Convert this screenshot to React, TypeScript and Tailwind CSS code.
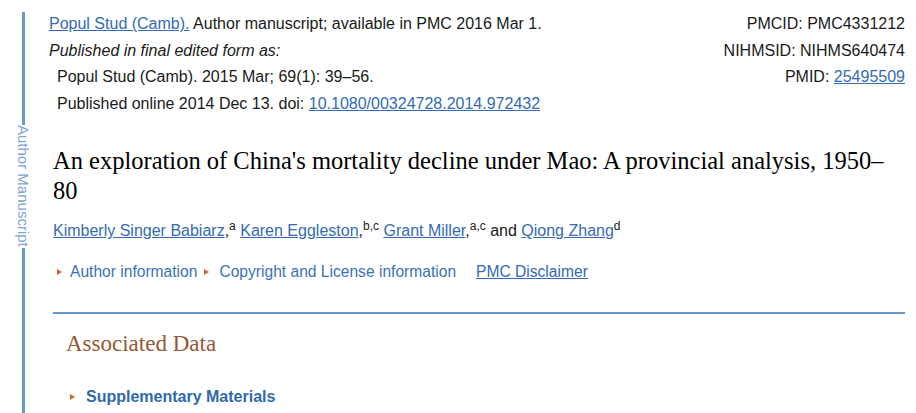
import React from "react";

const Tri = () => (
  <span className="inline-block h-0 w-0 border-y-[3px] border-l-[5px] border-y-transparent border-l-[#cc6633] align-middle" />
);

export default function App() {
  return (
    <div className="flex h-[413px] w-[916px] overflow-hidden bg-white font-['Liberation_Sans',Arial,sans-serif] text-[16px] text-[#1a1a1a]">
      {/* side label */}
      <div className="flex w-[49px] shrink-0 flex-col pl-[16px] pt-[12px]">
        <div className="flex h-full w-[15px] flex-col items-center">
          <div className="h-[113px] w-[3px] bg-[#6699cc]" />
          <div className="my-[2px] h-[123px] text-[15px] leading-[15px] text-[#7ea3d4] [writing-mode:vertical-rl]">
            Author Manuscript
          </div>
          <div className="w-[3px] flex-1 bg-[#6699cc]" />
        </div>
      </div>

      {/* main */}
      <div className="flex flex-1 flex-col pr-[11px] pt-[11px]">
        <div className="flex justify-between leading-[26.6px]">
          <div>
            <div>
              <a className="text-[#336bb3] underline">Popul Stud (Camb).</a> Author manuscript; available in PMC 2016 Mar 1.
            </div>
            <div className="italic">Published in final edited form as:</div>
            <div className="pl-[8px]">Popul Stud (Camb). 2015 Mar; 69(1): 39–56.</div>
            <div className="pl-[8px]">
              Published online 2014 Dec 13. doi:{" "}
              <a className="text-[#336bb3] underline">10.1080/00324728.2014.972432</a>
            </div>
          </div>
          <div className="text-right">
            <div>PMCID: PMC4331212</div>
            <div>NIHMSID: NIHMS640474</div>
            <div>
              PMID: <a className="text-[#336bb3] underline">25495509</a>
            </div>
          </div>
        </div>

        <div className="pl-[4px]">
          <h1 className="mt-[29px] font-['Liberation_Serif',serif] text-[24.5px] leading-[30px] font-normal text-black">
            An exploration of China's mortality decline under Mao: A provincial analysis, 1950–
            <br />
            80
          </h1>

          <div className="mt-[15px] leading-[20px]">
            <a className="text-[#336bb3] underline">Kimberly Singer Babiarz</a>,
            <sup className="text-[12px]">a</sup>{" "}
            <a className="text-[#336bb3] underline">Karen Eggleston</a>,
            <sup className="text-[12px]">b,c</sup>{" "}
            <a className="text-[#336bb3] underline">Grant Miller</a>,
            <sup className="text-[12px]">a,c</sup> and{" "}
            <a className="text-[#336bb3] underline">Qiong Zhang</a>
            <sup className="text-[12px]">d</sup>
          </div>

          <div className="mt-[21px] flex items-center pl-[4px] text-[15.6px] leading-[20px] text-[#3a72b9]">
            <Tri />
            <span className="ml-[8px]">Author information</span>
            <span className="ml-[7px] flex items-center">
              <Tri />
            </span>
            <span className="ml-[10px]">Copyright and License information</span>
            <a className="ml-[20px] text-[#336bb3] underline">PMC Disclaimer</a>
          </div>

          <div className="mt-[30px] border-t-2 border-[#6699cc]">
            <h2 className="pl-[13px] pt-[15px] font-['Liberation_Serif',serif] text-[23px] leading-[30px] font-normal text-[#985735]">
              Associated Data
            </h2>
            <div className="mt-[28px] flex items-center pl-[17px] font-bold leading-[20px] text-[#2f6aab]">
              <Tri />
              <span className="ml-[11px]">Supplementary Materials</span>
            </div>
          </div>
        </div>
      </div>
    </div>
  );
}
